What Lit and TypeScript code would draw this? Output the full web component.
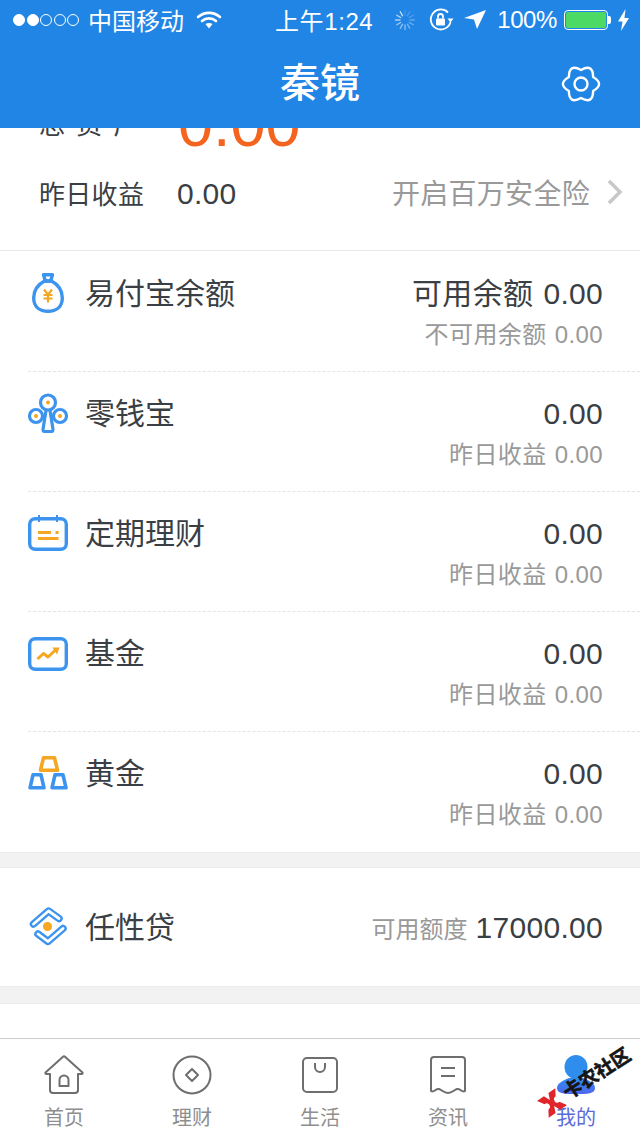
import { LitElement, html, svg, css, TemplateResult } from 'lit';
import { customElement } from 'lit/decorators.js';

const BLUE = '#3d94ee';
const GOLD = '#f5a623';

// six soft lobes, points left and right like the reference gear
function gearPath(cx: number, cy: number, valley: number, ctrl: number): string {
  const pt = (r: number, deg: number) => {
    const a = (deg * Math.PI) / 180;
    return `${(cx + r * Math.cos(a)).toFixed(2)} ${(cy + r * Math.sin(a)).toFixed(2)}`;
  };
  let d = `M${pt(valley, -30)}`;
  for (let k = 0; k < 6; k++) {
    const lobe = k * 60;
    d += ` Q${pt(ctrl, lobe)} ${pt(valley, lobe + 30)}`;
  }
  return d + ' Z';
}

const spokes = Array.from({ length: 12 }, (_, i) => i);

const icons: Record<string, TemplateResult> = {
  bag: html`<svg class="ico" viewBox="0 0 40 40" fill="none" stroke="${BLUE}" stroke-width="3.4" stroke-linejoin="round">
    <path d="M15.500 1.700h9l-1.800 6.300h-5.400z" />
    <path d="M16.500 8C9 12 5.700 18 5.700 25c0 9 6 13.300 14.300 13.300S34.300 34 34.300 25c0-7-3.300-13-10.800-17z" />
    <path d="M16 16.500l4 5 4-5M15.500 22h9M15.500 25.500h9M20 21.500v8" stroke="${GOLD}" stroke-width="2.200" />
  </svg>`,
  tree: html`<svg class="ico" viewBox="0 0 40 40" fill="none" stroke="${BLUE}" stroke-width="3.2" stroke-linejoin="round">
    <circle cx="20" cy="9.500" r="7.500" />
    <circle cx="8" cy="23" r="6.500" />
    <circle cx="32" cy="23" r="6.500" />
    <path d="M18 17.500l-3 19c0 1 .5 2 1.500 2h7c1 0 1.500-1 1.500-2l-3-19" />
    <path d="M14 24c1.500-.3 2.500-1 3.500-2.500M26 24c-1.500-.3-2.500-1-3.500-2.500" stroke-width="2.500" />
    <circle cx="20" cy="9.500" r="2" fill="${GOLD}" stroke="none" />
    <circle cx="8" cy="23" r="2" fill="${GOLD}" stroke="none" />
    <circle cx="32" cy="23" r="2" fill="${GOLD}" stroke="none" />
  </svg>`,
  calendar: html`<svg class="ico" viewBox="0 0 40 40" fill="none" stroke="${BLUE}" stroke-width="3.4">
    <rect x="1.700" y="5.700" width="36.600" height="30.600" rx="5.500" />
    <path d="M11 2v7M29 2v7" stroke-width="2" />
    <path d="M10 19.500h13M27.500 19.500h3M10 25.500h20.500" stroke="${GOLD}" stroke-width="2.800" />
  </svg>`,
  chart: html`<svg class="ico" viewBox="0 0 40 40" fill="none" stroke="${BLUE}" stroke-width="3.4">
    <rect x="1.700" y="5.700" width="36.600" height="30.600" rx="5.500" />
    <path d="M9.500 26l6-5.500 4.500 3.500 7.500-7" stroke="${GOLD}" stroke-width="3" stroke-linejoin="round" />
    <path d="M24.500 14.500h7l-2.500 7z" fill="${GOLD}" stroke="none" />
  </svg>`,
  gold: html`<svg class="ico" viewBox="0 0 40 40" fill="none" stroke="${BLUE}" stroke-width="3.6" stroke-linejoin="round">
    <path d="M15.500 4.800h11l3 12.400h-17z" stroke="${GOLD}" />
    <path d="M5 21.800h8l3 13h-14z" />
    <path d="M27 21.800h8l3 13h-14z" />
  </svg>`,
  loan: html`<svg class="ico" viewBox="0 0 40 40" fill="none" stroke-linecap="round" stroke-linejoin="round">
    <path d="M5.500 17L20.500 4 31 11.500M35 21.500L20 34.500 10 27" stroke="${BLUE}" stroke-width="7.500" />
    <path d="M5.500 17L20.500 4 31 11.500M35 21.500L20 34.500 10 27" stroke="#fff" stroke-width="2.800" />
    <circle cx="19.500" cy="19.500" r="4.500" fill="${GOLD}" />
  </svg>`,
};

interface Account {
  icon: string;
  name: string;
  label?: string;
  subLabel: string;
}

const accounts: Account[] = [
  { icon: 'bag', name: '易付宝余额', label: '可用余额', subLabel: '不可用余额' },
  { icon: 'tree', name: '零钱宝', subLabel: '昨日收益' },
  { icon: 'calendar', name: '定期理财', subLabel: '昨日收益' },
  { icon: 'chart', name: '基金', subLabel: '昨日收益' },
  { icon: 'gold', name: '黄金', subLabel: '昨日收益' },
];

const tabs: { name: string; icon: TemplateResult; active?: boolean }[] = [
  {
    name: '首页',
    icon: html`<svg class="tab-ico" viewBox="0 0 40 40" fill="none" stroke="#6e6e6e" stroke-width="2" stroke-linejoin="round">
      <path d="M6 19H2.500c-1.200 0-1.500-1-.7-1.800L19 1.800a1.500 1.500 0 0 1 2 0l17.200 15.400c.8.8.5 1.800-.7 1.800H34v16a3 3 0 0 1-3 3H9a3 3 0 0 1-3-3z" />
      <path d="M15.500 31v-6a4.500 4.500 0 0 1 9 0v6z" />
    </svg>`,
  },
  {
    name: '理财',
    icon: html`<svg class="tab-ico" viewBox="0 0 40 40" fill="none" stroke="#6e6e6e" stroke-width="2" stroke-linejoin="round">
      <circle cx="20" cy="20" r="18.500" />
      <path d="M20 14l6 6-6 6-6-6z" />
    </svg>`,
  },
  {
    name: '生活',
    icon: html`<svg class="tab-ico" viewBox="0 0 40 40" fill="none" stroke="#6e6e6e" stroke-width="2">
      <rect x="3" y="3" width="34" height="34" rx="4" />
      <path d="M15 8v4a5 5 0 0 0 10 0V8" />
    </svg>`,
  },
  {
    name: '资讯',
    icon: html`<svg class="tab-ico" viewBox="0 0 40 40" fill="none" stroke="#6e6e6e" stroke-width="2" stroke-linejoin="round">
      <path d="M6 2h28a3 3 0 0 1 3 3v31c-3 2-5-3-8-2s-5 4-9 4-6-3-9-4-5 4-8 2V5a3 3 0 0 1 3-3z" />
      <path d="M13 13h14M13 21h14" />
    </svg>`,
  },
  {
    name: '我的',
    active: true,
    icon: html`<svg class="tab-ico" viewBox="0 0 40 40">
      <defs>
        <linearGradient id="me" x1="0" y1="0" x2="0" y2="1">
          <stop offset="0" stop-color="#2f8eed" />
          <stop offset="1" stop-color="#4f66ee" />
        </linearGradient>
      </defs>
      <path d="M1 33c0-5 7-8 12-10l14 0c5 2 12 5 12 10 0 6-8 6-19 6s-19 0-19-6z" fill="url(#me)" />
      <ellipse cx="20" cy="12" rx="11.500" ry="12" fill="#2f8eed" />
    </svg>`,
  },
];

@customElement('app-root')
export class AppRoot extends LitElement {
  static styles = css`
    :host {
      display: flex;
      flex-direction: column;
      width: 640px;
      height: 1136px;
      overflow: hidden;
      position: relative;
      background: #fff;
      color: #3a3f45;
      font-family: 'Liberation Sans', 'Noto Sans CJK SC', sans-serif;
    }

    /* === Header === */
    .header {
      flex: none;
      height: 128px;
      background: #2185e6;
      color: #fff;
      position: relative;
      z-index: 1;
    }

    .status {
      height: 40px;
      display: flex;
      align-items: center;
      padding: 0 10px 0 13px;
      font-size: 24px;
    }

    .status-left,
    .status-right {
      display: flex;
      align-items: center;
    }

    .status-left {
      width: 262px;
      flex: none;
    }

    .status-right {
      flex: 1;
      justify-content: flex-end;
    }

    .dots {
      display: flex;
      gap: 1.500px;
      margin-right: 9px;
    }

    .dot {
      width: 12px;
      height: 12px;
      box-sizing: border-box;
      border-radius: 50%;
      border: 1px solid #fff;
    }

    .dot.on {
      background: #fff;
    }

    .carrier,
    .time {
      position: relative;
      top: -1px;
    }

    .wifi {
      width: 26px;
      height: 20px;
      margin-left: 12px;
    }

    .time {
      white-space: nowrap;
      letter-spacing: 0.6px;
    }

    .spin {
      width: 22px;
      height: 22px;
      margin-right: 12px;
    }

    .lock {
      width: 26px;
      height: 26px;
      margin-right: 10px;
    }

    .loc {
      width: 22px;
      height: 20px;
      margin-right: 11px;
    }

    .pct {
      letter-spacing: -0.4px;
    }

    .battery {
      width: 44px;
      height: 20px;
      margin-left: 7px;
      border: 1px solid #fff;
      border-radius: 4px;
      padding: 1px;
      box-sizing: border-box;
    }

    .battery-fill {
      height: 100%;
      background: #4cd964;
      border-radius: 2px;
    }

    .nub {
      width: 3px;
      height: 8px;
      background: #fff;
      border-radius: 0 2px 2px 0;
      margin-right: 6px;
    }

    .bolt {
      width: 13px;
      height: 22px;
    }

    .nav {
      height: 88px;
      display: flex;
      align-items: center;
      justify-content: center;
      position: relative;
      padding-bottom: 2px;
      box-sizing: border-box;
    }

    .title {
      font-size: 40px;
      font-weight: 500;
      line-height: 50px;
    }

    .gear {
      position: absolute;
      right: 39px;
      top: 26px;
      width: 40px;
      height: 36px;
    }

    /* === Scrolled body === */
    .body {
      flex: 1;
      min-height: 0;
      overflow: hidden;
    }

    .summary {
      margin-top: -36px;
      border-bottom: 1px solid #e8e8e8;
      height: 159px;
      box-sizing: border-box;
      padding-left: 39px;
      padding-right: 16px;
    }

    .total {
      display: flex;
      align-items: flex-end;
      height: 56px;
    }

    .total-label {
      font-size: 26px;
      width: 139px;
      line-height: 30px;
      margin-bottom: 8px;
      word-spacing: 4px;
    }

    .total-value {
      font-size: 63px;
      line-height: 70px;
      color: #f5641e;
      margin-bottom: -11px;
    }

    .yesterday {
      display: flex;
      align-items: center;
      height: 40px;
      margin-top: 24px;
    }

    .yesterday-label {
      font-size: 26px;
      letter-spacing: 0.3px;
      width: 138px;
    }

    .yesterday-value {
      font-size: 30px;
      letter-spacing: 0.3px;
      flex: 1;
      position: relative;
      top: 2px;
    }

    .safe {
      font-size: 28px;
      letter-spacing: 0.3px;
      color: #999;
    }

    .chevron {
      width: 18px;
      height: 26px;
      margin-left: 16px;
    }

    .list {
      padding-top: 1px;
    }

    .row {
      display: flex;
      align-items: flex-start;
      height: 120px;
      box-sizing: border-box;
      margin-left: 28px;
      padding: 21px 37px 0 0;
      border-bottom: 1px dashed #e4e4e4;
    }

    .row:last-child {
      border-bottom: none;
    }

    .ico {
      flex: none;
      width: 40px;
      height: 40px;
      margin-right: 17px;
    }

    .name {
      flex: 1;
      font-size: 30px;
      line-height: 41px;
    }

    .values {
      text-align: right;
    }

    .main {
      font-size: 30px;
      line-height: 41px;
      letter-spacing: 0.3px;
      word-spacing: 1.500px;
      white-space: nowrap;
    }

    .sub {
      font-size: 24px;
      line-height: 41px;
      letter-spacing: 0.4px;
      word-spacing: 1px;
      color: #999;
      white-space: nowrap;
    }

    .band {
      height: 16px;
      background: #f2f2f2;
      border-top: 1px solid #ececec;
      border-bottom: 1px solid #ececec;
      box-sizing: border-box;
    }

    .band.tall {
      height: 18px;
    }

    .loan {
      display: flex;
      align-items: center;
      height: 118px;
      margin-left: 28px;
      padding-right: 37px;
      box-sizing: border-box;
    }

    .loan-label {
      font-size: 24px;
      color: #999;
      margin-right: 8px;
    }

    /* === Tab bar === */
    .tabs {
      flex: none;
      height: 98px;
      display: grid;
      grid-template-columns: repeat(5, 128px);
      border-top: 1px solid #ccc;
      box-sizing: border-box;
      background: #fff;
    }

    .tab {
      display: flex;
      flex-direction: column;
      align-items: center;
      padding-top: 16px;
      font-size: 20px;
      line-height: 28px;
      color: #8e8e8e;
    }

    .tab.active {
      color: #5b6bd8;
    }

    .tab-ico {
      width: 40px;
      height: 40px;
      margin-bottom: 9px;
    }

    /* === Watermark over the tab bar === */
    .mark {
      position: absolute;
      left: 539px;
      top: 1090px;
      width: 26px;
      height: 26px;
      transform: rotate(-35deg);
    }

    .mark-text {
      position: absolute;
      left: 559px;
      top: 1061px;
      font-size: 19px;
      line-height: 26px;
      font-weight: 700;
      color: #151515;
      -webkit-text-stroke: 0.6px #151515;
      white-space: nowrap;
      transform: rotate(-33deg);
    }
  `;

  private renderStatus() {
    return html`
      <div class="status">
        <div class="status-left">
          <div class="dots">
            <span class="dot on"></span><span class="dot on"></span><span class="dot"></span><span class="dot"></span><span class="dot"></span>
          </div>
          <span class="carrier">中国移动</span>
          <svg class="wifi" viewBox="0 0 26 20" fill="none" stroke="#fff" stroke-width="2.600" stroke-linecap="round">
            <path d="M2 7c6.500-5.500 15.500-5.500 22 0M6 11c4-3.500 10-3.500 14 0" />
            <path d="M9.500 14c2-1.500 5-1.500 7 0L13 18.500z" fill="#fff" stroke="none" />
          </svg>
        </div>
        <span class="time">上午1:24</span>
        <div class="status-right">
          <svg class="spin" viewBox="0 0 22 22" stroke="#fff" stroke-width="1.400" stroke-linecap="round">
            ${spokes.map(
              i => svg`<line x1="11" y1="1.500" x2="11" y2="6" transform="rotate(${i * 30} 11 11)" opacity="${0.12 + i * 0.055}" />`
            )}
          </svg>
          <svg class="lock" viewBox="0 0 26 26" fill="none" stroke="#fff" stroke-width="1.800">
            <path d="M22.500 15A10 10 0 1 1 20 5.500" />
            <path d="M25.500 11.500h-6l3 4z" fill="#fff" stroke="none" />
            <rect x="8" y="11.500" width="9" height="7" rx="1" fill="#fff" stroke="none" />
            <path d="M10 11.500V9.500a2.500 2.500 0 0 1 5 0v2" />
          </svg>
          <svg class="loc" viewBox="0 0 22 20"><path d="M22 0L0 8l10 1.500L13 19z" fill="#fff" /></svg>
          <span class="pct">100%</span>
          <div class="battery"><div class="battery-fill"></div></div>
          <div class="nub"></div>
          <svg class="bolt" viewBox="0 0 13 22"><path d="M8.500 0L1 12.500h4.500L4 22l8-13H7.500z" fill="#fff" /></svg>
        </div>
      </div>
    `;
  }

  render() {
    return html`
      <div class="header">
        ${this.renderStatus()}
        <div class="nav">
          <div class="title">秦镜</div>
          <svg class="gear" viewBox="0 0 40 36" fill="none" stroke="#fff" stroke-width="2.400" stroke-linejoin="round">
            <path d="${gearPath(20, 18, 14, 24)}" />
            <circle cx="20" cy="18" r="6.500" />
          </svg>
        </div>
      </div>

      <div class="body">
        <div class="summary">
          <div class="total">
            <span class="total-label">总 资 产</span>
            <span class="total-value">0.00</span>
          </div>
          <div class="yesterday">
            <span class="yesterday-label">昨日收益</span>
            <span class="yesterday-value">0.00</span>
            <span class="safe">开启百万安全险</span>
            <svg class="chevron" viewBox="0 0 18 26" fill="none" stroke="#c8c8c8" stroke-width="3.500"><path d="M3 2l11 11L3 24" /></svg>
          </div>
        </div>

        <div class="list">
          ${accounts.map(
            a => html`
              <div class="row">
                ${icons[a.icon]}
                <div class="name">${a.name}</div>
                <div class="values">
                  <div class="main">${a.label ? `${a.label} ` : ''}0.00</div>
                  <div class="sub">${a.subLabel} 0.00</div>
                </div>
              </div>
            `
          )}
        </div>

        <div class="band"></div>
        <div class="loan">
          ${icons.loan}
          <div class="name">任性贷</div>
          <span class="loan-label">可用额度</span>
          <span class="main">17000.00</span>
        </div>
        <div class="band tall"></div>
      </div>

      <div class="tabs">
        ${tabs.map(
          t => html`
            <div class="tab ${t.active ? 'active' : ''}">
              ${t.icon}
              <span>${t.name}</span>
            </div>
          `
        )}
      </div>

      <svg class="mark" viewBox="0 0 28 28">
        <path d="M2 3l9 0 3 7 3-7 9 0-7 11 7 11-9 0-3-7-3 7-9 0 7-11z" fill="#e0262b" />
        <circle cx="7" cy="14" r="3.500" fill="#fff" />
        <circle cx="21" cy="14" r="3.500" fill="#fff" />
      </svg>
      <span class="mark-text">卡农社区</span>
    `;
  }
}

declare global {
  interface HTMLElementTagNameMap {
    'app-root': AppRoot;
  }
}
